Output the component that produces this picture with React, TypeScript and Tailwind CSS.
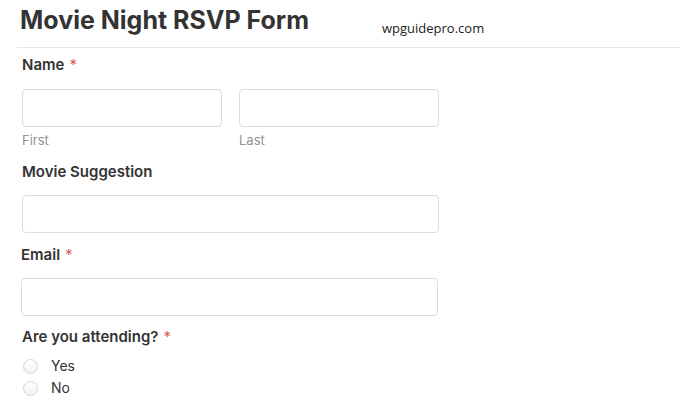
import React from "react";

function Req() {
  return <span className="ml-[5px] font-normal text-[#d45a5a]">*</span>;
}

function Box({ className = "" }: { className?: string }) {
  return (
    <div
      className={`h-[38px] rounded-[4px] border border-[#dcdcdc] bg-white ${className}`}
    />
  );
}

function Radio({ label }: { label: string }) {
  return (
    <div className="flex h-[22px] items-center">
      <span className="ml-[23px] h-[15px] w-[15px] rounded-full border border-[#d4d4d4] bg-gradient-to-b from-white to-[#f3f3f3]" />
      <span className="ml-[13px] text-[14px] leading-[18px] text-[#333]">{label}</span>
    </div>
  );
}

export default function App() {
  return (
    <div
      className="relative h-[400px] w-[680px] overflow-hidden bg-white"
      style={{ fontFamily: "Inter, 'Liberation Sans', sans-serif" }}
    >
      <div className="ml-[17px] h-[48px] border-b border-[#e8e8e8] pl-[3px] pt-[5px]">
        <h1 className="text-[25px] font-bold leading-[30px] text-[#333]">
          Movie Night RSVP Form
        </h1>
      </div>
      <span
        className="absolute left-[382px] top-[19px] text-[13px] leading-[18px] text-[#222]"
        style={{ fontFamily: "'Open Sans', sans-serif" }}
      >
        wpguidepro.com
      </span>

      <div className="pl-[22px]">
        <div className="mt-[7px] text-[15px] font-semibold leading-[20px] text-[#333]">
          Name
          <Req />
        </div>
        <div className="mt-[14px] flex gap-[17px]">
          <div className="w-[200px]">
            <Box />
            <div className="mt-[4px] text-[13px] leading-[18px] text-[#939393]">First</div>
          </div>
          <div className="w-[200px]">
            <Box />
            <div className="mt-[4px] text-[13px] leading-[18px] text-[#939393]">Last</div>
          </div>
        </div>

        <div className="mt-[13px] text-[15px] font-semibold leading-[20px] text-[#333]">
          Movie Suggestion
        </div>
        <Box className="mt-[13px] w-[417px]" />

        <div className="-ml-px mt-[12px] text-[15px] font-semibold leading-[20px] text-[#333]">
          Email
          <Req />
        </div>
        <Box className="-ml-px mt-[13px] w-[417px]" />

        <div className="mt-[11px] text-[15px] font-semibold leading-[20px] text-[#333]">
          Are you attending?
          <Req />
        </div>
      </div>
      <div className="mt-[8px]">
        <Radio label="Yes" />
        <Radio label="No" />
      </div>
    </div>
  );
}
